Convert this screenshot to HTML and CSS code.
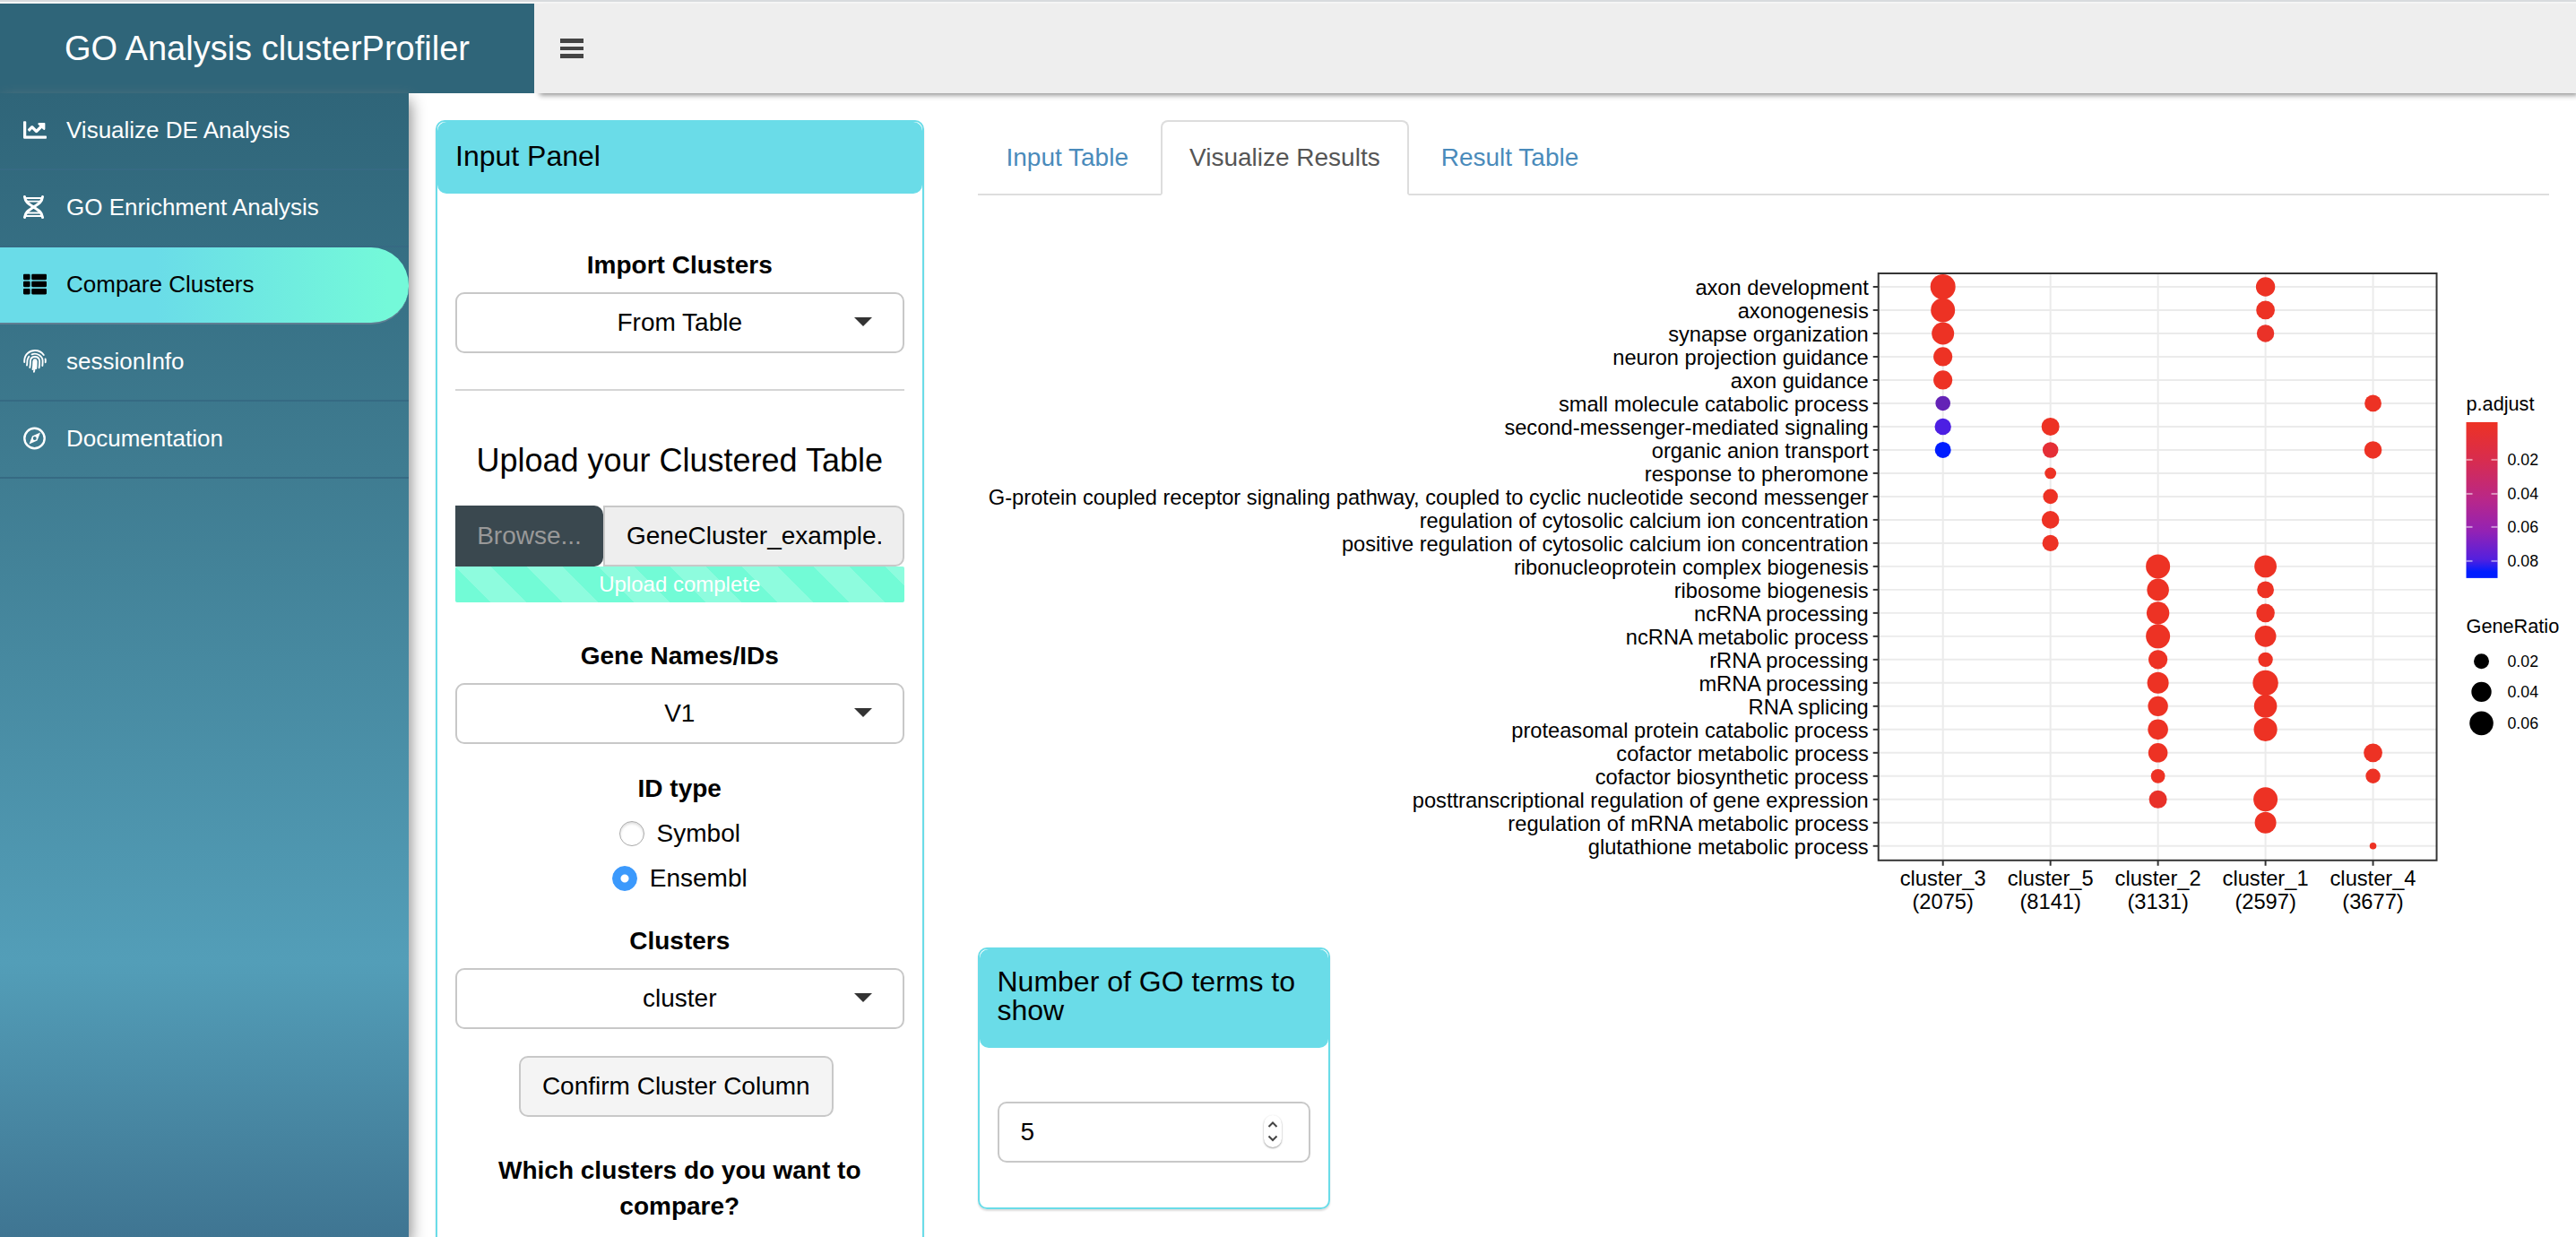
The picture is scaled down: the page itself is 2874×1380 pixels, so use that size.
FILE: index.html
```html
<!DOCTYPE html>
<html lang="en">
<head>
<meta charset="utf-8">
<title>GO Analysis clusterProfiler</title>
<link rel="stylesheet" href="styles.css">
</head>
<body>
<div class="app">
  <header class="header">
    <a class="logo" href="#">GO Analysis clusterProfiler</a>
    <div class="navbar">
      <button class="toggle" type="button" aria-label="Toggle navigation"><svg class="bars" viewBox="0 0 26 22"><path d="M0 0h26v5H0zM0 9h26v4H0zM0 17h26v5H0z"/></svg></button>
    </div>
  </header>
  <div class="body">
    <nav class="sidebar">
      <a class="nav-item" href="#"><svg class="icon" viewBox="0 0 512 512"><path fill="currentColor" d="M496 384H64V80c0-8.840-7.160-16-16-16H16C7.160 64 0 71.160 0 80v336c0 17.670 14.330 32 32 32h464c8.840 0 16-7.160 16-16v-32c0-8.840-7.160-16-16-16zM464 96H345.940c-21.380 0-32.090 25.850-16.970 40.970l32.400 32.400L288 242.750l-73.370-73.370c-12.500-12.500-32.760-12.500-45.250 0l-68.690 68.690c-6.250 6.250-6.250 16.380 0 22.630l22.620 22.620c6.250 6.250 16.380 6.250 22.630 0L192 237.250l73.370 73.370c12.500 12.500 32.760 12.500 45.250 0l96-96 32.400 32.400c15.120 15.120 40.970 4.410 40.970-16.970V112c.010-8.840-7.150-16-15.990-16z"/></svg>Visualize DE Analysis</a>
      <a class="nav-item" href="#"><svg class="icon" viewBox="0 0 26 26" fill="none" stroke="currentColor"><path stroke-width="3" stroke-linecap="round" d="M1.500 1.500C2.500 9 8 10.500 11.500 13c4 3 9 4.500 10 11.500M21.500 1.500C20.500 9 15 10.500 11.500 13c-4 3-9 4.500-10 11.500"/><path stroke-width="1.800" d="M3 3h17M5 6.600h13M5 19.500h13M3 23h17"/></svg>GO Enrichment Analysis</a>
      <a class="nav-item active" href="#"><svg class="icon" viewBox="0 0 512 512"><path fill="currentColor" d="M149.333 216v80c0 13.255-10.745 24-24 24H24c-13.255 0-24-10.745-24-24v-80c0-13.255 10.745-24 24-24h101.333c13.255 0 24 10.745 24 24zM0 376v80c0 13.255 10.745 24 24 24h101.333c13.255 0 24-10.745 24-24v-80c0-13.255-10.745-24-24-24H24c-13.255 0-24 10.745-24 24zM125.333 32H24C10.745 32 0 42.745 0 56v80c0 13.255 10.745 24 24 24h101.333c13.255 0 24-10.745 24-24V56c0-13.255-10.745-24-24-24zm80 448H488c13.255 0 24-10.745 24-24v-80c0-13.255-10.745-24-24-24H205.333c-13.255 0-24 10.745-24 24v80c0 13.255 10.745 24 24 24zm-24-424v80c0 13.255 10.745 24 24 24H488c13.255 0 24-10.745 24-24V56c0-13.255-10.745-24-24-24H205.333c-13.255 0-24 10.745-24 24zm24 264H488c13.255 0 24-10.745 24-24v-80c0-13.255-10.745-24-24-24H205.333c-13.255 0-24 10.745-24 24v80c0 13.255 10.745 24 24 24z"/></svg>Compare Clusters</a>
      <a class="nav-item" href="#"><svg class="icon" viewBox="0 0 26 26" fill="none" stroke="currentColor" stroke-width="1.900" stroke-linecap="round"><path d="M1.200 14v-2C1.500 5.500 7 1 13 1c4 0 7.500 1.800 9.800 5M24.600 10.500c.3 1.200.3 2.500.1 3.700M4 17.500c.4-2 .3-3.500.5-5.500.2-1.500.8-3 1.800-4.200M9.500 5.300C15 3 21.500 7 21.600 12.500c0 2 0 3.500-.3 5.500M7.300 20c.7-3 .5-5 .6-7.500.6-6 9.500-6 10.200 0 .1 2.500 0 5-.5 7.800M10.500 22c.8-3 .8-6 .8-9 .2-2.300 3.200-2.300 3.400 0 0 3 0 5.500-.5 8M13 13.500c0 4 0 7.500-1.100 11.300"/></svg>sessionInfo</a>
      <a class="nav-item" href="#"><svg class="icon" viewBox="0 0 26 26"><circle cx="12.500" cy="13" r="11.200" fill="none" stroke="currentColor" stroke-width="2.400"/><path fill="currentColor" fill-rule="evenodd" d="M19 6.500 15.500 15.500 6.500 19.500 10 10.500zM12.700 11a2 2 0 1 0 .1 4 2 2 0 0 0-.1-4z"/></svg>Documentation</a>
    </nav>
    <main class="content">
      <section class="column">
        <div class="box">
          <div class="box-header"><h3 class="box-title">Input Panel</h3></div>
          <form class="box-body">
            <div class="group">
              <label class="label" for="import">Import Clusters</label>
              <div class="pick"><select class="control" id="import"><option>From Table</option></select></div>
            </div>
            <hr class="rule">
            <h4 class="upload-title">Upload your Clustered Table</h4>
            <div class="file-row">
              <button class="browse" type="button">Browse...</button>
              <input class="control file-name" type="text" aria-label="Selected file" value="GeneCluster_example." readonly>
            </div>
            <div class="progress">Upload complete</div>
            <div class="group">
              <label class="label" for="genes">Gene Names/IDs</label>
              <div class="pick"><select class="control" id="genes"><option>V1</option></select></div>
            </div>
            <fieldset class="group radios">
              <legend class="label">ID type</legend>
              <label class="radio-row"><input class="radio" type="radio" name="idtype">Symbol</label>
              <label class="radio-row"><input class="radio" type="radio" name="idtype" checked>Ensembl</label>
            </fieldset>
            <div class="group">
              <label class="label" for="clusters">Clusters</label>
              <div class="pick"><select class="control" id="clusters"><option>cluster</option></select></div>
            </div>
            <div class="actions"><button class="confirm" type="button">Confirm Cluster Column</button></div>
            <p class="question">Which clusters do you want to compare?</p>
          </form>
        </div>
      </section>
      <section class="column">
        <nav class="tabs">
          <a class="tab" href="#">Input Table</a>
          <a class="tab current" href="#">Visualize Results</a>
          <a class="tab" href="#">Result Table</a>
        </nav>
        <svg class="plot" id="plot" viewBox="0 0 889 405" role="img" aria-label="GO terms per cluster">
          <defs>
            <linearGradient id="scale" x1="0" y1="0" x2="0" y2="1">
              <stop offset="0" stop-color="#ed3224"/>
              <stop offset=".250" stop-color="#d72c50"/>
              <stop offset=".500" stop-color="#b8278a"/>
              <stop offset=".700" stop-color="#9322b4"/>
              <stop offset=".880" stop-color="#5420de"/>
              <stop offset=".960" stop-color="#001dff"/>
              <stop offset="1" stop-color="#001dff"/>
            </linearGradient>
          </defs>
        </svg>
        <div class="box small">
          <div class="box-header"><h3 class="box-title"><label for="terms">Number of GO terms to show</label></h3></div>
          <div class="box-body">
            <div class="stepper">
              <input class="control number" id="terms" type="number" value="5">
              <svg class="arrows" viewBox="0 0 20 36" fill="none" stroke="#444" stroke-width="2"><path d="M5.500 13l4.500-4.500 4.500 4.500M5.500 23.500l4.500 4.500 4.500-4.500"/></svg>
            </div>
          </div>
        </div>
      </section>
    </main>
  </div>
</div>
<script src="plot.js"></script>
</body>
</html>
```

FILE: styles.css
```css
* { box-sizing: border-box; }

body {
  margin: 0;
  background: #fff;
  color: #000;
  font: 28px/40px "Liberation Sans", Arial, sans-serif;
}

a { text-decoration: none; }

button, input, select { font: inherit; color: inherit; }

.app {
  display: flex;
  flex-direction: column;
  height: 100vh;
  overflow: hidden;
  border-top: 2px solid #d8dbde;
}

/* Top bar */
.header {
  display: flex;
  flex: none;
  height: 102px;
  padding-top: 2px;
  background: #f6f6f6;
}

.logo {
  display: flex;
  align-items: center;
  justify-content: center;
  width: 596px;
  background: #2f6579;
  color: #fff;
  font-size: 38px;
}

.navbar {
  display: flex;
  align-items: center;
  flex: 1;
  background: #eee;
  box-shadow: 4px 4px 6px -2px #888;
}

.toggle {
  display: flex;
  padding: 0 29px;
  border: 0;
  background: none;
}

.bars { width: 26px; height: 22px; fill: #444; }

.body {
  display: flex;
  flex: 1;
  min-height: 0;
}

/* Sidebar */
.sidebar {
  flex: none;
  width: 456px;
  background: linear-gradient(#2f6579, #3f7c91 33%, #539eb8 76%, #3f7592 100%);
  box-shadow: 2px 8px 16px #888;
}

.nav-item {
  display: flex;
  align-items: center;
  gap: 22px;
  height: 86px;
  padding: 0 26px 2px;
  border-bottom: 2px solid #366a83;
  color: #fff;
  font-size: 26px;
}

.nav-item.active {
  border-bottom-color: #5f7e93;
  border-radius: 0 42px 42px 0;
  background: linear-gradient(90deg, #6adce8, #6adce8 38%, #74f9d9 95%);
  color: #000;
}

.icon { width: 26px; height: 26px; }

/* Main area */
.content {
  display: grid;
  flex: 1;
  grid-template-columns: 3fr 9fr;
  align-items: start;
}

.column {
  min-width: 0;
  padding: 30px;
}

.box {
  border: 2px solid #6adce8;
  border-radius: 10px;
  box-shadow: 0 2px 2px #ddd;
}

.small { width: calc(25% - 45px); }

.box-header {
  padding: 20px;
  border-radius: 10px;
  background: #6adce8;
}

.box-title {
  display: inline-block;
  margin: 0;
  font-size: 32px;
  font-weight: 400;
  line-height: 32px;
}

.box-body { padding: 60px 20px 20px; }

.group { margin: 0 0 30px; padding: 0; border: 0; }

.label {
  display: block;
  width: 100%;
  padding: 0;
  margin-bottom: 10px;
  font-weight: 700;
  text-align: center;
}

.control {
  display: block;
  width: 100%;
  height: 68px;
  padding: 0 24px;
  border: 2px solid #c8c8c8;
  border-radius: 10px;
  background: #fff;
}

.pick { position: relative; }

.pick .control {
  appearance: none;
  text-align: center;
  text-align-last: center;
}

.pick::after {
  content: "";
  position: absolute;
  top: 28px;
  right: 36px;
  border: 10px solid transparent;
  border-top-color: #333;
  border-bottom: 0;
  pointer-events: none;
}

.rule {
  margin: 40px 0;
  border: 0;
  border-top: 2px solid #d5d5d5;
}

.upload-title {
  margin: 0 0 30px;
  padding-top: 18px;
  font-size: 36px;
  font-weight: 400;
  text-align: center;
}

.file-row { display: flex; }

.browse {
  flex: none;
  width: 165px;
  padding: 0;
  border: 0;
  border-radius: 0 10px 10px 0;
  background: #3a484f;
  color: #999;
}

.file-name {
  flex: 1;
  min-width: 0;
  border-radius: 0 10px 10px 0;
  background: #eee;
}

.progress {
  height: 40px;
  margin-bottom: 40px;
  border-radius: 2px;
  background: #72fbd6 linear-gradient(45deg, #fff3 25%, #fff0 25%, #fff0 50%, #fff3 50%, #fff3 75%, #fff0 75%) 0 0 / 80px 80px;
  color: #fff;
  font-size: 24px;
  text-align: center;
}

.radios { display: flex; flex-direction: column; align-items: center; gap: 10px; }

.radio-row {
  display: flex;
  align-items: center;
  gap: 14px;
}

.radio {
  appearance: none;
  width: 28px;
  height: 28px;
  margin: 0;
  border: 1px solid #aaa;
  border-radius: 50%;
  background: #fff;
  box-shadow: inset 0 2px 3px #ddd;
}

.radio:checked {
  border-color: #3b99fc;
  background: radial-gradient(circle, #fff 4px, #3b99fc 5px);
  box-shadow: none;
}

.actions {
  display: flex;
  justify-content: center;
  margin-bottom: 40px;
  padding-right: 8px;
}

.confirm {
  height: 68px;
  padding: 0 24px;
  border: 2px solid #c8c8c8;
  border-radius: 10px;
  background: #f4f4f4;
}

.question {
  margin: 0 0 40px;
  padding: 0 30px;
  font-weight: 700;
  text-align: center;
}

/* Tabs */
.tabs {
  display: flex;
  gap: 4px;
  border-bottom: 2px solid #ddd;
}

.tab {
  margin-bottom: -2px;
  padding: 20px 30px;
  border: 2px solid transparent;
  border-radius: 8px 8px 0 0;
  color: #4a8bbb;
}

.tab.current {
  border-color: #ddd #ddd #fff;
  background: #fff;
  color: #555;
}

/* Dot plot, drawn in points */
.plot {
  display: block;
  width: 100%;
  margin: 40px 0 0;
  overflow: visible;
  font-size: 12px;
}

.plot .grid { stroke: #ebebeb; stroke-width: 1; }
.plot .tick { stroke: #333; stroke-width: 1; }
.plot .frame { fill: none; stroke: #333; stroke-width: 1; }
.plot .bar-tick { stroke: #fff; stroke-opacity: .5; stroke-width: 1; }
.plot .term { text-anchor: end; }
.plot .cluster { text-anchor: middle; }
.plot .legend-title { font-size: 11px; }
.plot .legend-text { font-size: 9px; }

/* Number field */
.stepper { position: relative; margin-bottom: 30px; }

.number { appearance: textfield; }

.number::-webkit-inner-spin-button { appearance: none; }

.arrows {
  position: absolute;
  top: 15px;
  right: 32px;
  width: 20px;
  height: 36px;
  border-radius: 10px;
  box-shadow: 0 1px 2px #999;
}
```

FILE: plot.js
```js
const RED = '#ed3224';
const clusters = [['cluster_3', '(2075)'], ['cluster_5', '(8141)'], ['cluster_2', '(3131)'], ['cluster_1', '(2597)'], ['cluster_4', '(3677)']];

// Each term is followed by its dots: column, radius and, where it is not red, colour.
const terms = [
  ['axon development', [0, 14], [3, 10.7]],
  ['axonogenesis', [0, 13.5], [3, 10.4]],
  ['synapse organization', [0, 12.5], [3, 9.7, '#ea3228']],
  ['neuron projection guidance', [0, 10.6]],
  ['axon guidance', [0, 10.6]],
  ['small molecule catabolic process', [0, 8.3, '#6423b6'], [4, 9.4]],
  ['second-messenger-mediated signaling', [0, 9.2, '#4c1fe3'], [1, 10]],
  ['organic anion transport', [0, 9, '#001dff'], [1, 8.8, '#e42f36'], [4, 9.8]],
  ['response to pheromone', [1, 6.4]],
  ['G-protein coupled receptor signaling pathway, coupled to cyclic nucleotide second messenger', [1, 8.3]],
  ['regulation of cytosolic calcium ion concentration', [1, 9.8]],
  ['positive regulation of cytosolic calcium ion concentration', [1, 9.1]],
  ['ribonucleoprotein complex biogenesis', [2, 13.5], [3, 12.4]],
  ['ribosome biogenesis', [2, 12.3], [3, 9.4]],
  ['ncRNA processing', [2, 12.7], [3, 10.3]],
  ['ncRNA metabolic process', [2, 13.5], [3, 11.9]],
  ['rRNA processing', [2, 10.6], [3, 8.2]],
  ['mRNA processing', [2, 12], [3, 14.2]],
  ['RNA splicing', [2, 11.2], [3, 12.8]],
  ['proteasomal protein catabolic process', [2, 11.3], [3, 13.1]],
  ['cofactor metabolic process', [2, 10.8], [4, 10.4]],
  ['cofactor biosynthetic process', [2, 7.9], [4, 8.2]],
  ['posttranscriptional regulation of gene expression', [2, 10, '#e83129'], [3, 13.5]],
  ['regulation of mRNA metabolic process', [3, 12]],
  ['glutathione metabolic process', [4, 3.8]]
];

const plot = document.getElementById('plot');

// Lengths below are device units; the drawing itself is in points.
const POINTS = 889 / 1754;
const lengths = new Set(['x', 'y', 'x1', 'y1', 'x2', 'y2', 'cx', 'cy', 'r', 'width', 'height']);

function add(name, attributes, text) {
  const node = document.createElementNS('http://www.w3.org/2000/svg', name);
  for (const key in attributes) {
    node.setAttribute(key, lengths.has(key) ? attributes[key] * POINTS : attributes[key]);
  }
  if (text) node.textContent = text;
  plot.appendChild(node);
}

function line(kind, x1, y1, x2, y2) {
  add('line', { class: kind, x1, y1, x2, y2 });
}

const left = 1005, right = 1628, upper = 47, lower = 702;
const columnX = i => 1077 + 120 * i;
const rowY = i => 62 + 26 * i;

terms.forEach((term, i) => line('grid', left, rowY(i), right, rowY(i)));
clusters.forEach((cluster, i) => line('grid', columnX(i), upper, columnX(i), lower));

terms.forEach(([name, ...dots], i) => {
  add('text', { class: 'term', x: 994, y: rowY(i) + 9 }, name);
  line('tick', left - 6, rowY(i), left, rowY(i));
  dots.forEach(([column, r, fill = RED]) => add('circle', { cx: columnX(column), cy: rowY(i), r, fill }));
});

clusters.forEach(([name, size], i) => {
  line('tick', columnX(i), lower, columnX(i), lower + 6);
  add('text', { class: 'cluster', x: columnX(i), y: 730 }, name);
  add('text', { class: 'cluster', x: columnX(i), y: 756 }, size);
});

add('rect', { class: 'frame', x: left, y: upper, width: right - left, height: lower - upper });

add('text', { class: 'legend-title', x: 1661, y: 200 }, 'p.adjust');
add('rect', { x: 1661, y: 213, width: 35, height: 174, fill: 'url(#scale)' });
[['0.02', 255], ['0.04', 293], ['0.06', 330], ['0.08', 368]].forEach(([label, y]) => {
  line('bar-tick', 1661, y, 1668, y);
  line('bar-tick', 1689, y, 1696, y);
  add('text', { class: 'legend-text', x: 1707, y: y + 6 }, label);
});

add('text', { class: 'legend-title', x: 1661, y: 448 }, 'GeneRatio');
[['0.02', 480, 8.5], ['0.04', 514, 11.2], ['0.06', 549, 13.3]].forEach(([label, cy, r]) => {
  add('circle', { cx: 1678, cy, r });
  add('text', { class: 'legend-text', x: 1707, y: cy + 6 }, label);
});
```
